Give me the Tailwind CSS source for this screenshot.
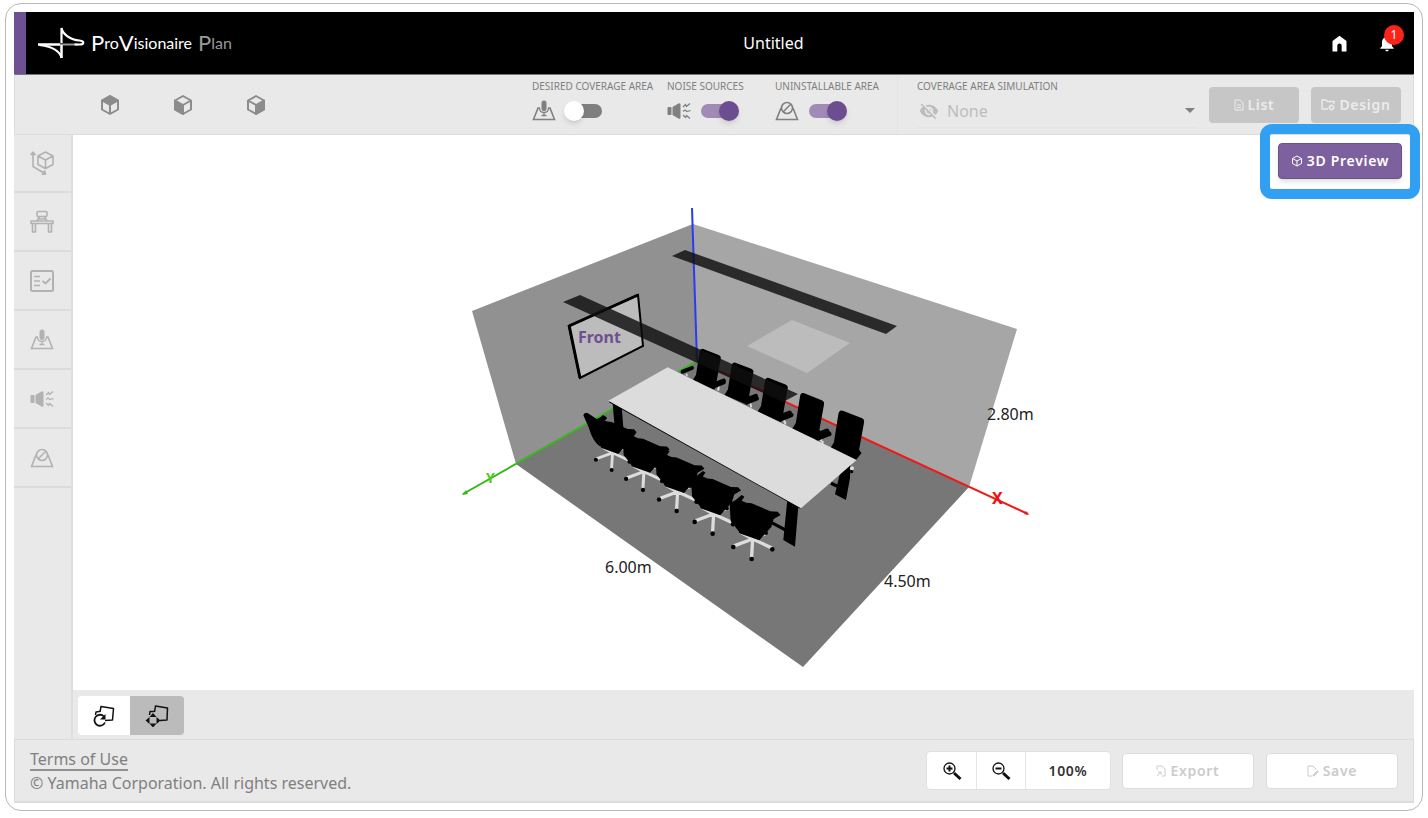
<!DOCTYPE html>
<html lang="en">
<head>
  <meta charset="UTF-8">
  <meta name="viewport" content="width=device-width, initial-scale=1.0">
  <title>ProVisionaire Plan</title>
  <script src="https://cdn.jsdelivr.net/npm/@tailwindcss/browser@4"></script>
</head>
<body class="flex min-h-screen bg-white px-[5px] pt-[3px] pb-[7px] font-['Noto_Sans',sans-serif] text-[#808080]">
  <!-- Shared icons -->
  <svg class="hidden">
    <symbol id="icon-mic-area" viewBox="0 0 24 24">
      <path d="M8 9H6L1.500 20.500h21L18 9h-2" fill="none" stroke="currentColor" stroke-width="1.600"/>
      <rect x="9.500" y="1.500" width="5" height="10.500" rx="2.500" fill="currentColor"/>
      <path d="M7.500 9c0 6 9 6 9 0M12 13.500v3M9.500 16.500h5" fill="none" stroke="currentColor" stroke-width="1.300"/>
    </symbol>
    <symbol id="icon-noise" viewBox="0 0 24 24">
      <rect x="0.500" y="8" width="4" height="8" rx="1" fill="currentColor"/>
      <path d="M5.500 8l6-3.500q2-1 2 1v13q0 2-2 1l-6-3.500z" fill="currentColor"/>
      <path d="M16 8l2.500-2.500 1 2 3.500-3M16 12.500l2-1.500 2 1.500 3.500-1M16 16l2.500 2.500 1-2 3.500 3" fill="none" stroke="currentColor" stroke-width="1.300"/>
    </symbol>
    <symbol id="icon-no-area" viewBox="0 0 24 24">
      <path d="M6 9L1.500 20.500h21L18 9" fill="none" stroke="currentColor" stroke-width="1.600"/>
      <circle cx="12" cy="9" r="5.500" fill="none" stroke="currentColor" stroke-width="1.600"/>
      <path d="M8 13l8-8" stroke="currentColor" stroke-width="1.600"/>
    </symbol>
  </svg>

  <!-- Window -->
  <div class="flex flex-1 flex-col rounded-2xl border border-[#b8b8b8] px-2 pt-2 pb-[7px]">
    <!-- Header -->
    <header class="flex h-[62px] items-center justify-between border-l-12 border-[#6f5092] bg-black pr-[3px] text-white">
      <a href="#" class="flex items-center gap-1.5 pl-3">
        <svg class="h-8 w-[47px]" viewBox="0 0 47 32" fill="none" stroke="#fff">
          <path d="M22 17.500h18" stroke="#999" stroke-width="2"/>
          <path d="M0 17.500h22M23.500 18V31" stroke-width="2.500"/>
          <path d="M23.500 31c-1-6-8-11.500-22-13" stroke-width="2"/>
          <path d="M23.500 16V1c1 6 9 12 18 12.500 5 .5 5 4 0 4h-5" stroke-width="2.200"/>
        </svg>
        <span class="flex items-center font-['Liberation_Sans_Narrow',Lato,sans-serif] text-base leading-6">
          <span class="text-[22px]">P</span>ro<span class="text-[22px]">V</span>isionaire
          <span class="ml-1.5 flex items-center text-[#999]"><span class="text-[22px]">P</span>lan</span>
        </span>
      </a>
      <h1 class="text-base">Untitled</h1>
      <nav class="flex">
        <button type="button" aria-label="Home" class="flex size-12 items-center justify-center">
          <svg class="size-[21px]" viewBox="0 0 24 24" fill="currentColor"><path d="M4 21V9l8-6 8 6v12h-5.500v-6.500a2.500 2.500 0 00-5 0V21z"/></svg>
        </button>
        <button type="button" aria-label="Notifications" class="relative flex size-12 items-center justify-center">
          <svg class="size-5" viewBox="0 0 24 24" fill="currentColor"><path d="M12 22c1.100 0 2-.9 2-2h-4c0 1.100.89 2 2 2zm6-6v-5c0-3.070-1.640-5.640-4.500-6.320V4c0-.83-.67-1.500-1.500-1.500s-1.500.67-1.500 1.500v.68C7.630 5.360 6 7.920 6 11v5l-2 2v1h16v-1l-2-2z"/></svg>
          <span class="absolute top-1.5 right-[7px] flex size-5 items-center justify-center rounded-full bg-[#fe2318] text-xs">1</span>
        </button>
      </nav>
    </header>

    <!-- Toolbar -->
    <div class="flex h-[61px] items-center justify-between border border-t-[#777] border-[#dcdcdc] bg-[#e9e9e9] pr-3">
      <div class="flex pl-[58px] text-[#8c8c8c]">
        <button type="button" aria-label="Top view" class="flex w-[73px] justify-center">
          <svg class="size-6" viewBox="0 0 24 24" fill="none" stroke="currentColor" stroke-width="2" stroke-linejoin="round"><path d="M12 3l8 4.500v9L12 21l-8-4.500v-9z"/><path d="M4 7.500L12 3l8 4.500-8 4.500z" fill="currentColor"/><path d="M12 12v9"/></svg>
        </button>
        <button type="button" aria-label="Left view" class="flex w-[73px] justify-center">
          <svg class="size-6" viewBox="0 0 24 24" fill="none" stroke="currentColor" stroke-width="2" stroke-linejoin="round"><path d="M12 3l8 4.500v9L12 21l-8-4.500v-9z"/><path d="M4 7.500l8 4.500v9l-8-4.500z" fill="currentColor"/><path d="M12 12l8-4.500"/></svg>
        </button>
        <button type="button" aria-label="Right view" class="flex w-[73px] justify-center">
          <svg class="size-6" viewBox="0 0 24 24" fill="none" stroke="currentColor" stroke-width="2" stroke-linejoin="round"><path d="M12 3l8 4.500v9L12 21l-8-4.500v-9z"/><path d="M20 7.500L12 12v9l8-4.500z" fill="currentColor"/><path d="M12 12L4 7.500"/></svg>
        </button>
      </div>
      <div class="flex h-full items-center">
        <div class="flex h-full gap-4 pt-[3px] text-[10px] leading-4">
          <div class="w-[119px] whitespace-nowrap">
            <label for="coverage">DESIRED COVERAGE AREA</label>
            <div class="flex h-[34px] items-center gap-2.5">
              <svg class="size-6"><use href="#icon-mic-area"/></svg>
              <input id="coverage" type="checkbox" class="relative h-3.5 w-9 appearance-none rounded-full bg-[#7f7f7f] before:absolute before:-top-[3px] before:-left-0.5 before:size-5 before:rounded-full before:bg-white before:shadow-md before:content-[''] checked:bg-[#9f8bb5] checked:before:left-[18px] checked:before:bg-[#6c4d8f]">
            </div>
          </div>
          <div class="w-[92px] whitespace-nowrap">
            <label for="noise">NOISE SOURCES</label>
            <div class="flex h-[34px] items-center gap-2.5">
              <svg class="size-6"><use href="#icon-noise"/></svg>
              <input id="noise" type="checkbox" checked class="relative h-3.5 w-9 appearance-none rounded-full bg-[#7f7f7f] before:absolute before:-top-[3px] before:-left-0.5 before:size-5 before:rounded-full before:bg-white before:shadow-md before:content-[''] checked:bg-[#9f8bb5] checked:before:left-[18px] checked:before:bg-[#6c4d8f]">
            </div>
          </div>
          <div class="w-[106px] whitespace-nowrap">
            <label for="uninstallable">UNINSTALLABLE AREA</label>
            <div class="flex h-[34px] items-center gap-2.5">
              <svg class="size-6"><use href="#icon-no-area"/></svg>
              <input id="uninstallable" type="checkbox" checked class="relative h-3.5 w-9 appearance-none rounded-full bg-[#7f7f7f] before:absolute before:-top-[3px] before:-left-0.5 before:size-5 before:rounded-full before:bg-white before:shadow-md before:content-[''] checked:bg-[#9f8bb5] checked:before:left-[18px] checked:before:bg-[#6c4d8f]">
            </div>
          </div>
          <div class="-mt-[3px] w-[300px] border-l border-[#e4e4e4] pt-[3px] pl-[19px]">
            <label for="simulation">COVERAGE AREA SIMULATION</label>
            <div class="flex h-[34px] items-center gap-2 border-b border-[#e4e4e4] px-0.5 text-[#bdbdbd]">
              <svg class="size-5" viewBox="0 0 24 24" fill="currentColor"><path d="M12 7c2.760 0 5 2.240 5 5 0 .65-.13 1.260-.36 1.830l2.920 2.920c1.510-1.260 2.700-2.890 3.430-4.750-1.730-4.390-6-7.500-11-7.500-1.400 0-2.740.25-3.980.7l2.160 2.160C10.740 7.130 11.350 7 12 7zM2 4.270l2.280 2.280.46.46C3.080 8.300 1.780 10.020 1 12c1.730 4.390 6 7.500 11 7.500 1.550 0 3.030-.3 4.380-.84l.42.42L19.730 22 21 20.730 3.270 3 2 4.270zM7.530 9.800l1.550 1.550c-.05.21-.08.43-.08.65 0 1.660 1.340 3 3 3 .22 0 .44-.03.65-.08l1.550 1.550c-.67.33-1.410.53-2.200.53-2.760 0-5-2.240-5-5 0-.79.2-1.530.53-2.200zm4.310-.78l3.150 3.150.02-.16c0-1.660-1.340-3-3-3l-.17.01z"/></svg>
              <select id="simulation" disabled class="flex-1 appearance-none text-base opacity-100">
                <option>None</option>
              </select>
              <svg class="h-[5px] w-2.5 text-[#808080]" viewBox="0 0 10 5" fill="currentColor"><path d="M0 0h10L5 5z"/></svg>
            </div>
          </div>
        </div>
        <button type="button" disabled class="ml-3 flex h-9 w-[90px] items-center justify-center gap-1 rounded bg-[#c6c6c6] text-sm font-semibold tracking-wider text-[#ececec]">
          <svg class="h-3 w-2.5" viewBox="0 0 10 12" fill="none" stroke="currentColor"><path d="M1 1h5l3 3v7H1zM3 6h4M3 8.500h4"/></svg>
          List
        </button>
        <button type="button" disabled class="ml-3 flex h-9 w-[90px] items-center justify-center gap-1 rounded bg-[#c6c6c6] text-sm font-semibold tracking-wider text-[#ececec]">
          <svg class="h-3 w-3.5" viewBox="0 0 14 12" fill="none" stroke="currentColor" stroke-width="1.300"><path d="M7 10H1V1h4l1.500 1.500H13V5"/><circle cx="10.500" cy="8.500" r="2"/><path d="M10.500 5.500v1M10.500 10.500v1M7.500 8.500h1M12.500 8.500h1"/></svg>
          Design
        </button>
      </div>
    </div>

    <div class="flex flex-1">
      <!-- Sidebar -->
      <aside class="w-[59px] shrink-0 border-r-2 border-[#dedede] bg-[#e9e9e9] text-[#b2b2b2] *:flex *:h-[59px] *:w-full *:items-center *:justify-center *:border-b-2 *:border-[#dcdcdc] *:pr-0.5 *:first:h-[58px]">
        <button type="button" aria-label="Room size">
          <svg class="size-6" viewBox="0 0 24 24" fill="none" stroke="currentColor" stroke-width="1.600" stroke-linejoin="round"><path d="M15.500 1l7.500 4v8.500l-7.500 4-7.500-4V5zM8 5l7.500 4L23 5M15.500 9v8.500"/><path d="M3 3v12.500l10 6"/><path d="M1 3.500L3 1l2 2.500zM12.500 23.500l3-.5-1-3z" fill="currentColor"/></svg>
        </button>
        <button type="button" aria-label="Furniture">
          <svg class="size-6" viewBox="0 0 24 24" fill="none" stroke="currentColor" stroke-width="1.600" stroke-linejoin="round"><rect x="7" y="1.500" width="10" height="5" rx="1"/><path d="M9.500 6.500L7 11M14.500 6.500L17 11M8 9h8"/><path d="M1 11h22v2.500H1zM2.500 13.500h3V22h-3zM18.500 13.500h3V22h-3z"/></svg>
        </button>
        <button type="button" aria-label="Requirements">
          <svg class="size-6" viewBox="0 0 24 24" fill="none" stroke="currentColor" stroke-width="2"><rect x="1" y="2" width="22" height="20" rx="1.500"/><path d="M4 7.500h6M4 12h6M4 16.500h6" stroke-width="1.600"/><path d="M12.500 12l3 2.500L20.500 9.500"/></svg>
        </button>
        <button type="button" aria-label="Coverage area"><svg class="size-6"><use href="#icon-mic-area"/></svg></button>
        <button type="button" aria-label="Noise sources"><svg class="size-6"><use href="#icon-noise"/></svg></button>
        <button type="button" aria-label="Uninstallable area"><svg class="size-6"><use href="#icon-no-area"/></svg></button>
      </aside>

      <div class="flex flex-1 flex-col">
        <!-- 3D view -->
        <main class="relative flex-1 bg-white">
          <svg class="absolute inset-0 size-full" viewBox="73 135 1341 555">
            <defs>
              <g id="chair-back">
                <path d="M1 8Q3-3 12 0L58 18Q66 21 64 30L52 96 58 104 44 122-20 94-10 78z"/>
                <path d="M-50 68l28-11" stroke="#000" stroke-width="12" stroke-linecap="round"/>
                <path d="M-38 74v8" stroke="#ddd" stroke-width="5"/>
              </g>
              <g id="chair-arm">
                <path d="M46 106l27-11" stroke="#000" stroke-width="13" stroke-linecap="round"/>
                <path d="M58 110v12" stroke="#ddd" stroke-width="5"/>
              </g>
              <g id="chair-front">
                <path d="M3-60l-54 20M3-60L0-8M3-60l56 26M3-60l38-16M3-60l-32-18" stroke="#ddd" stroke-width="10" stroke-linecap="round"/>
                <circle cx="-55" cy="-36" r="7"/>
                <circle cy="0" r="7"/>
                <circle cx="62" cy="-29" r="7"/>
                <circle cx="43" cy="-78" r="6"/>
                <circle cx="-33" cy="-82" r="5"/>
                <path d="M-66-167l18-10 18-15 8 5-8 12 14 6 16 2 56 24 22 1 9 10-21 12-7 24-36 40-56-20-30-38z"/>
              </g>
            </defs>
            <!-- Room -->
            <path d="M472 311l221-87 4 137-181 103z" fill="#919191"/>
            <path d="M693 224l324 105-48 158-272-126z" fill="#a6a6a6"/>
            <path d="M516 464l181-103 272 126-166 180z" fill="#777"/>
            <path d="M747 346l45-26 58 23-43 30z" fill="#bcbcbc"/>
            <!-- Axes -->
            <path d="M692 208l5 153" stroke="#2a3bf0" stroke-width="2"/>
            <path d="M463 494l234-133" stroke="#35b818" stroke-width="2"/>
            <path d="M697 361l331 153" stroke="#f01818" stroke-width="2"/>
            <path d="M1029 515l-5-1 2-3z" fill="#f01818"/>
            <path d="M462 495l4-5 2 4z" fill="#35b818"/>
            <!-- Screen -->
            <path d="M569 326l69-31 5 51-63 32z" fill="#bcbcbc" stroke="#000" stroke-width="2"/>
            <path d="M569 325l11 53M569 326l69-31" stroke="#000" stroke-width="3"/>
            <!-- Table and chairs -->
            <g transform="translate(570 340) scale(0.3333)">
              <use href="#chair-back" transform="translate(388 27)"/>
              <use href="#chair-arm" transform="translate(388 27)"/>
              <use href="#chair-back" transform="translate(484 68) scale(1.030)"/>
              <use href="#chair-arm" transform="translate(482 70) scale(1.030)"/>
              <use href="#chair-back" transform="translate(584 114) scale(1.080)"/>
              <use href="#chair-arm" transform="translate(580 116) scale(1.080)"/>
              <use href="#chair-back" transform="translate(689 160) scale(1.140)"/>
              <use href="#chair-arm" transform="translate(686 163) scale(1.160)"/>
              <use href="#chair-back" transform="translate(804 212) scale(1.220)"/>
              <path d="M128 190l27 10 6 75-27-12zM652 480l33 20-10 120-35-20zM810 400l32-40-2 55-12 65-33-17z"/>
              <path d="M605 548l45 24M783 430l26 12" stroke="#000" stroke-width="10"/>
              <circle cx="846" cy="385" r="6" fill="#ddd"/>
              <circle cx="845" cy="395" r="5"/>
              <path d="M117 187l574 319 4-10L120 180z"/>
              <path d="M115 182L293 82l567 278-167 145z" fill="#dcdcdc"/>
              <use href="#chair-front" transform="translate(125 390) scale(0.860)"/>
              <path d="M40 226q3-11 14-6l26 17 22-8q10 1 8 8l-16 12 46 5-12 60-40 4q-20-14-32-56z"/>
              <use href="#chair-front" transform="translate(219 450) scale(0.920)"/>
              <use href="#chair-front" transform="translate(320 513) scale(0.960)"/>
              <use href="#chair-front" transform="translate(428 581) scale(0.980)"/>
              <use href="#chair-front" transform="translate(545 657)"/>
            </g>
            <!-- Ceiling beams -->
            <path d="M672 256l13-6 212 76-11 8zM563 302l17-7 218 99-15 8z" fill="#0d0f0e" fill-opacity="0.820"/>
            <g font-size="16" fill="#222">
              <text x="605" y="573">6.00m</text>
              <text x="884" y="587">4.50m</text>
              <text x="987" y="420">2.80m</text>
              <text x="578" y="343" font-weight="700" fill="#6f5092">Front</text>
              <text x="992" y="504" font-weight="700" fill="#f01010">X</text>
              <text x="486" y="483" font-size="14" font-weight="700" fill="#4fc820">Y</text>
            </g>
          </svg>
          <div class="absolute -top-[11px] -right-1.5 rounded-xl border-10 border-[#319ff2] px-2 pt-[9px] pb-2.5">
            <button type="button" class="flex h-9 w-[124px] items-center justify-center gap-1 rounded border border-[#6a5585] bg-[#7d619e] text-sm font-semibold tracking-wider text-white shadow-md">
              <svg class="size-3" viewBox="0 0 12 12" fill="none" stroke="currentColor" stroke-linejoin="round"><path d="M6 1l4.500 2.500v5L6 11 1.500 8.500v-5zM1.500 3.500L6 6l4.500-2.500M6 6v5"/></svg>
              3D Preview
            </button>
          </div>
        </main>
        <!-- Camera mode -->
        <div class="flex h-[49px] items-center bg-[#e9e9e9] px-[5px] pt-0.5 text-[#111]">
          <button type="button" aria-label="Rotate" class="flex h-[39px] w-[52px] items-center justify-center rounded-l bg-white pr-0.5 pb-0.5">
            <svg class="size-6" viewBox="0 0 24 24" fill="none" stroke="currentColor" stroke-width="1.500" stroke-linejoin="round"><path d="M14 17.500l7.500-.5 1-11.500L10 3.500 9 9M8.500 8.500L5 9l-.5 3"/><path d="M13 13.500a5.500 5.500 0 10 1 6" stroke-width="1.800"/><path d="M14.500 11v5.500H9z" fill="currentColor" stroke="none"/></svg>
          </button>
          <button type="button" aria-label="Pan" class="flex h-[39px] w-[54px] items-center justify-center rounded-r bg-[#bbb] pb-0.5">
            <svg class="size-6" viewBox="0 0 24 24" fill="none" stroke="currentColor" stroke-width="1.500" stroke-linejoin="round"><path d="M15 17.500l7-.5.500-12L10.500 3 9.500 9M9 8.500H5L4.500 12"/><path d="M8 10l3.500 4h-7zM8 24.500l3.500-4h-7zM.5 17.500l4-3.500v7zM15.500 17.500l-4-3.500v7z" fill="currentColor" stroke="none"/></svg>
          </button>
        </div>
      </div>
    </div>

    <!-- Footer -->
    <footer class="flex h-16 items-center justify-between border border-b-2 border-[#dcdcdc] bg-[#e9e9e9] px-[15px]">
      <div class="flex flex-col items-start text-base leading-5">
        <a href="#" class="border-b-2 border-[#909090]">Terms of Use</a>
        <p class="pt-0.5">© Yamaha Corporation. All rights reserved.</p>
      </div>
      <div class="flex items-center text-sm tracking-wider">
        <div class="flex h-[39px] divide-x divide-[#e6e6e6] overflow-hidden rounded border border-[#e0e0e0] bg-white text-[#111]">
          <button type="button" aria-label="Zoom in" class="flex w-[50px] items-center justify-center">
            <svg class="size-5" viewBox="0 0 20 20" fill="none" stroke="currentColor"><circle cx="7.500" cy="7.500" r="5.500" stroke-width="1.300"/><path d="M4.500 7.500h6M7.500 4.500v6" stroke-width="2"/><path d="M12 12l6.500 6" stroke-width="3"/></svg>
          </button>
          <button type="button" aria-label="Zoom out" class="flex w-[49px] items-center justify-center">
            <svg class="size-5" viewBox="0 0 20 20" fill="none" stroke="currentColor"><circle cx="7.500" cy="7.500" r="5.500" stroke-width="1.300"/><path d="M4.500 7.500h6" stroke-width="2"/><path d="M12 12l6.500 6" stroke-width="3"/></svg>
          </button>
          <button type="button" class="w-[84px] font-semibold tracking-wider text-[#333]">100%</button>
        </div>
        <button type="button" disabled class="ml-[11px] flex h-9 w-[132px] items-center justify-center gap-1 rounded border border-[#dcdcdc] bg-white font-semibold text-[#cbcbcb]">
          <svg class="h-3 w-2.5" viewBox="0 0 10 12" fill="none" stroke="currentColor"><path d="M1 5V1h5l3 3v7H6M1 11l4-4M2 7h3v3"/></svg>
          Export
        </button>
        <button type="button" disabled class="ml-3 flex h-9 w-[132px] items-center justify-center gap-1 rounded border border-[#dcdcdc] bg-white font-semibold text-[#cbcbcb]">
          <svg class="h-3 w-3" viewBox="0 0 12 12" fill="none" stroke="currentColor"><path d="M5 11H1V1h5l3 3v1"/><path d="M6 11l5-5" stroke-width="2"/></svg>
          Save
        </button>
      </div>
    </footer>
  </div>
</body>
</html>
